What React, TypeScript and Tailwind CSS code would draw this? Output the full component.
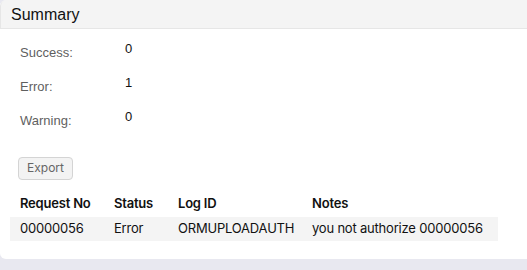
import React from 'react';

const counts = [
  { label: 'Success:', value: '0' },
  { label: 'Error:', value: '1' },
  { label: 'Warning:', value: '0' },
];

const rows = [
  { requestNo: '00000056', status: 'Error', logId: 'ORMUPLOADAUTH', notes: 'you not authorize 00000056' },
];

const App = () => {
  return (
    <div className="h-[270px] w-[527px] overflow-hidden bg-[#e8e8f0]">
      <div className="h-[259px] w-[560px] rounded-md bg-white overflow-hidden">
        {/* Header */}
        <div className="h-[29px] rounded-tl-md border-l border-b border-[#e6e6e6] bg-[#f4f4f4] pl-[10px] pt-[3px] font-['Liberation_Sans',sans-serif] text-[16px] text-[#111]">
          Summary
        </div>

        {/* Counts */}
        <div className="flex flex-col gap-[14px] pl-[20px] pt-[11px]">
          {counts.map((c) => (
            <div key={c.label} className="flex h-[20px]">
              <span className="w-[105px] pt-[3px] font-['Liberation_Sans',sans-serif] text-[13px] text-[#5f5f5f]">
                {c.label}
              </span>
              <span className="-mt-[1px] font-['Liberation_Sans',sans-serif] text-[13px] text-[#111]">
                {c.value}
              </span>
            </div>
          ))}
        </div>

        {/* Export */}
        <div className="pl-[18px] pt-[26px]">
          <button className="h-[23px] w-[55px] rounded-[4px] border border-[#d4d4d4] bg-[#f3f3f3] font-['Inter',sans-serif] text-[12px] text-[#666]">
            Export
          </button>
        </div>

        {/* Table */}
        <table className="ml-[10px] mt-[11px] border-collapse font-['Inter',sans-serif] text-[13px] tracking-[-0.2px] text-[#111]">
          <thead>
            <tr className="h-[26px] text-left">
              <th className="w-[94px] pl-[10px] font-semibold">Request No</th>
              <th className="w-[64px] pl-[10px] font-semibold">Status</th>
              <th className="w-[134px] pl-[10px] font-semibold">Log ID</th>
              <th className="w-[196px] pl-[10px] font-semibold">Notes</th>
            </tr>
          </thead>
          <tbody>
            {rows.map((r) => (
              <tr key={r.requestNo} className="h-[24px] bg-[#f4f4f4]">
                <td className="pl-[10px]">{r.requestNo}</td>
                <td className="pl-[10px]">{r.status}</td>
                <td className="pl-[10px]">{r.logId}</td>
                <td className="pl-[10px]">{r.notes}</td>
              </tr>
            ))}
          </tbody>
        </table>
      </div>
    </div>
  );
};

export default App;
